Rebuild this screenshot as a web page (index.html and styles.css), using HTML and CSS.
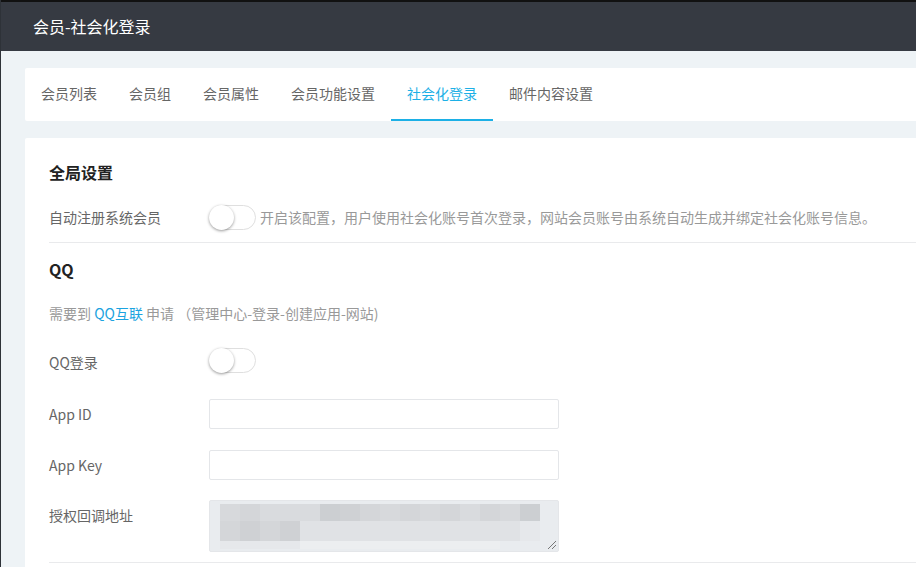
FILE: index.html
```html
<!DOCTYPE html>
<html lang="zh-CN">
<head>
    <meta charset="UTF-8">
    <meta name="viewport" content="width=device-width, initial-scale=1.0">
    <title>会员-社会化登录</title>
    <link rel="stylesheet" href="styles.css">
</head>
<body>
    <div class="header">会员-社会化登录</div>

    <div class="content">
        <div class="tabs">
            <a class="tab">会员列表</a>
            <a class="tab">会员组</a>
            <a class="tab">会员属性</a>
            <a class="tab">会员功能设置</a>
            <a class="tab active">社会化登录</a>
            <a class="tab">邮件内容设置</a>
        </div>

        <div class="card">
            <h3 class="title">全局设置</h3>
            <div class="row row-line">
                <label class="label">自动注册系统会员</label>
                <span class="switch"><span class="knob"></span></span>
                <span class="tip">开启该配置，用户使用社会化账号首次登录，网站会员账号由系统自动生成并绑定社会化账号信息。</span>
            </div>

            <h3 class="title qq-title">QQ</h3>
            <p class="note">需要到 <a class="link">QQ互联</a> 申请 （管理中心-登录-创建应用-网站)</p>

            <div class="form">
                <div class="field">
                    <label class="label">QQ登录</label>
                    <span class="switch"><span class="knob"></span></span>
                </div>
                <div class="field">
                    <label class="label">App ID</label>
                    <input class="input" type="text">
                </div>
                <div class="field">
                    <label class="label">App Key</label>
                    <input class="input" type="text">
                </div>
                <div class="field">
                    <label class="label">授权回调地址</label>
                    <!-- callback url, pixelated in the screenshot -->
                    <div class="textarea">
                        <div class="mosaic">
                            <i class="s2"></i><i class="s3"></i><i class="s1"></i><i class="s1"></i><i class="s1"></i><i class="s5"></i><i class="s4"></i><i class="s3"></i><i class="s2"></i><i class="s3"></i><i class="s2"></i><i class="s3"></i><i class="s1"></i><i class="s3"></i><i class="s2"></i><i class="s5"></i>
                            <i class="s3"></i><i class="s4"></i><i class="s3"></i><i class="s4"></i><i class="s6"></i><i class="s6"></i><i class="s6"></i><i class="s6"></i><i class="s6"></i><i class="s6"></i><i class="s6"></i><i class="s6"></i><i class="s6"></i><i class="s6"></i><i class="s6"></i><i class="s7"></i>
                            <i class="s7"></i><i class="s7"></i><i class="s7"></i><i class="s7"></i><i class="s8"></i><i class="s8"></i><i class="s8"></i><i class="s8"></i><i class="s8"></i><i class="s8"></i><i class="s8"></i><i class="s8"></i><i class="s8"></i><i class="s8"></i><i class="s9"></i><i class="s9"></i>
                        </div>
                        <span class="grip"></span>
                    </div>
                </div>
            </div>
        </div>
    </div>
</body>
</html>
```

FILE: styles.css
```css
body {
    margin: 0;
    background-color: #eef3f6;
    border-left: 1px solid #2e3238;
    font-family: "Noto Sans CJK SC", "Liberation Sans", sans-serif;
    font-size: 14px;
    color: #666;
    overflow: hidden;
}
.header {
    height: 49px;
    line-height: 49px;
    border-top: 2px solid #111;
    background-color: #363a42;
    color: #fff;
    font-size: 16px;
    padding-left: 32px;
}
.content {
    padding: 17px 0 0 24px;
}
.tabs {
    display: flex;
    height: 53px;
    background-color: #fff;
    border-radius: 2px 0 0 2px;
    margin-right: -20px;
}
.tab {
    display: block;
    padding: 0 16px;
    line-height: 51px;
    border-bottom: 2px solid transparent;
    color: #666;
    cursor: pointer;
}
.tab.active {
    color: #1cb0e6;
    border-bottom-color: #1cb0e6;
}
.card {
    margin-top: 17px;
    margin-right: -20px;
    background-color: #fff;
    padding: 20px 0 20px 24px;
    border-radius: 2px 0 0 2px;
}
.title {
    margin: 0;
    line-height: 28px;
    font-size: 16px;
    font-weight: bold;
    color: #222;
}
.row {
    display: flex;
    align-items: center;
    height: 50px;
    margin-top: 6px;
}
.row-line {
    border-bottom: 1px solid #e9eaec;
}
.label {
    width: 160px;
    flex: none;
    color: #666;
}
.switch {
    position: relative;
    display: inline-block;
    flex: none;
    width: 45px;
    height: 23px;
    border: 1px solid #dfdfdf;
    border-radius: 13px;
    background-color: #fff;
}
.knob {
    position: absolute;
    left: -1px;
    top: -1px;
    width: 25px;
    height: 25px;
    border-radius: 50%;
    background-color: #fff;
    box-shadow: 0 1px 3px rgba(0, 0, 0, 0.4);
}
.tip {
    margin-left: 4px;
    color: #999;
    white-space: nowrap;
}
.qq-title {
    margin-top: 12px;
}
.note {
    margin: 20px 0 0;
    line-height: 20px;
    color: #999;
}
.link {
    color: #1ba3e0;
    cursor: pointer;
}
.form {
    padding-top: 25px;
    padding-bottom: 10px;
    border-bottom: 1px solid #e9eaec;
}
.field {
    display: flex;
    align-items: flex-start;
    margin-bottom: 21px;
}
.field .label {
    line-height: 30px;
}
.field:first-child {
    height: 25px;
    margin-bottom: 26px;
}
.field:first-child .label {
    margin-top: -1px;
}
.field:nth-child(3) {
    margin-bottom: 20px;
}
.field:last-child {
    margin-bottom: 0;
}
.input {
    box-sizing: border-box;
    width: 350px;
    height: 30px;
    border: 1px solid #e4e6e9;
    border-radius: 2px;
    padding: 0 8px;
    font-size: 14px;
    outline: none;
}
.textarea {
    position: relative;
    box-sizing: border-box;
    width: 350px;
    height: 52px;
    border: 1px solid #e4e6e9;
    border-radius: 2px;
    background-color: #e9ecef;
    padding: 3px 0 0 10px;
}
.mosaic {
    display: grid;
    grid-template-columns: repeat(16, 20px);
    grid-template-rows: 17px 20px 8px;
}
.mosaic i {
    display: block;
}
.s1 { background-color: #d9dbde; }
.s2 { background-color: #d7d9dc; }
.s3 { background-color: #d4d6d9; }
.s4 { background-color: #cfd1d4; }
.s5 { background-color: #cccfd2; }
.s6 { background-color: #e0e2e5; }
.s7 { background-color: #e6e8eb; }
.s8 { background-color: #eceef0; }
.s9 { background-color: #e9ecef; }
.grip {
    position: absolute;
    right: 2px;
    bottom: 2px;
    width: 8px;
    height: 8px;
    background: linear-gradient(135deg, transparent 45%, #777 45%, #777 52%, transparent 52%, transparent 70%, #777 70%, #777 78%, transparent 78%);
}
```
